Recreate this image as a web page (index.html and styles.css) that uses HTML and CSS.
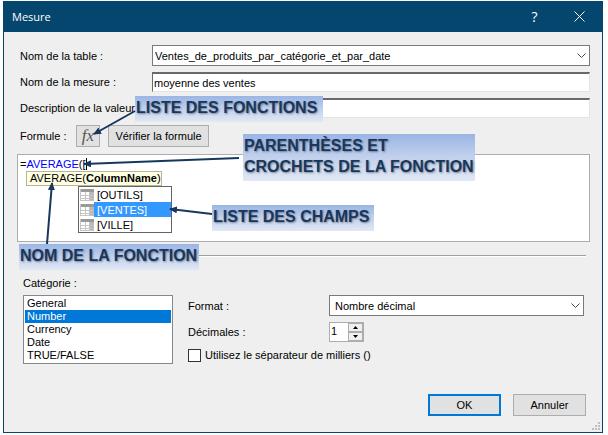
FILE: index.html
```html
<!DOCTYPE html>
<html lang="fr">
<head>
    <meta charset="UTF-8">
    <meta name="viewport" content="width=device-width, initial-scale=1.0">
    <title>Mesure</title>
    <link rel="stylesheet" href="styles.css">
</head>
<body>
    <div class="dialog">
        <header class="titlebar">
            <h1>Mesure</h1>
            <button type="button" class="caption-btn" aria-label="Aide">?</button>
            <button type="button" class="caption-btn" aria-label="Fermer">
                <svg width="11" height="11" viewBox="0 0 11 11"><path d="M.5.5l10 10M10.5.5l-10 10" stroke="#fff" fill="none"/></svg>
            </button>
        </header>

        <form class="content">
            <div class="fields">
                <label for="table">Nom de la table :</label>
                <div class="combo">
                    <select id="table">
                        <option>Ventes_de_produits_par_catégorie_et_par_date</option>
                    </select>
                    <svg class="chevron" width="9" height="6" viewBox="0 0 9 6"><path d="M.5.5l4 4 4-4" stroke="#444" fill="none"/></svg>
                </div>
                <label for="measure">Nom de la mesure :</label>
                <input type="text" class="sunken" id="measure" value="moyenne des ventes">
                <label for="description">Description de la valeur</label>
                <input type="text" class="sunken" id="description">
            </div>

            <div class="formula-bar">
                <span class="formula-label" id="formula-label">Formule :</span>
                <button type="button" class="btn fx" aria-label="Insérer une fonction"><i>fx</i></button>
                <button type="button" class="btn verify">Vérifier la formule</button>
            </div>

            <div class="editor">
                <div class="code" role="textbox" aria-labelledby="formula-label" contenteditable="true" spellcheck="false">=<span class="fn">AVERAGE</span>([<span class="caret"></span></div>
                <div class="hint">AVERAGE(<b>ColumnName</b>)</div>
                <ul class="columns">
                    <li><svg class="table-icon" width="14" height="12" viewBox="0 0 14 12"><use href="#grid"/></svg>[OUTILS]</li>
                    <li class="selected"><svg class="table-icon" width="14" height="12" viewBox="0 0 14 12"><use href="#grid"/></svg>[VENTES]</li>
                    <li><svg class="table-icon" width="14" height="12" viewBox="0 0 14 12"><use href="#grid"/></svg>[VILLE]</li>
                </ul>
            </div>

            <hr>

            <div class="format">
                <div class="category">
                    <label for="category">Catégorie :</label>
                    <select id="category" size="5">
                        <option>General</option>
                        <option selected>Number</option>
                        <option>Currency</option>
                        <option>Date</option>
                        <option>TRUE/FALSE</option>
                    </select>
                </div>
                <div class="options">
                    <label for="format">Format :</label>
                    <div class="combo">
                        <select id="format">
                            <option>Nombre décimal</option>
                        </select>
                        <svg class="chevron" width="9" height="6" viewBox="0 0 9 6"><path d="M.5.5l4 4 4-4" stroke="#444" fill="none"/></svg>
                    </div>
                    <label for="decimals">Décimales :</label>
                    <div class="spinner">
                        <input type="text" id="decimals" value="1">
                        <div class="spin-btns">
                            <button type="button" aria-label="Plus"><svg width="5" height="3" viewBox="0 0 5 3"><path d="M0 3L2.500 0 5 3z"/></svg></button>
                            <button type="button" aria-label="Moins"><svg width="5" height="3" viewBox="0 0 5 3"><path d="M0 0L2.500 3 5 0z"/></svg></button>
                        </div>
                    </div>
                    <label class="check"><input type="checkbox">Utilisez le séparateur de milliers ()</label>
                </div>
            </div>

            <div class="actions">
                <button type="submit" class="btn default">OK</button>
                <button type="button" class="btn">Annuler</button>
            </div>
        </form>

        <svg class="grip" width="8" height="8" viewBox="0 0 8 8"><path fill="#bfbfbf" d="M6 0h2v2H6zM3 3h2v2H3zM6 3h2v2H6zM0 6h2v2H0zM3 6h2v2H3zM6 6h2v2H6z"/></svg>
    </div>

    <!-- callouts -->
    <p class="callout functions">LISTE DES FONCTIONS</p>
    <p class="callout brackets">PARENTHÈSES ET<br>CROCHETS DE LA FONCTION</p>
    <p class="callout champs">LISTE DES CHAMPS</p>
    <p class="callout name">NOM DE LA FONCTION</p>
    <svg class="arrows" width="608" height="435" viewBox="0 0 608 435">
        <defs>
            <marker id="head" markerWidth="8" markerHeight="7" refX="7" refY="3.500" orient="auto" markerUnits="userSpaceOnUse"><path d="M0 0L8 3.500 0 7z" fill="#17375e"/></marker>
            <g id="grid">
                <path fill="#fff" d="M0 0h14v12H0z"/>
                <path fill="#999" d="M0 0h14v3H0z"/>
                <path fill="#b8b8b8" d="M10 3h4v9h-4z"/>
                <path stroke="#c4c4c4" fill="none" d="M.5 0v12M5.500 3v9M9.500 3v9M0 6.500h14M0 9.500h14M0 11.500h14"/>
            </g>
        </defs>
        <g stroke="#17375e" stroke-width="2">
            <path d="M135 111L94 134" marker-end="url(#head)"/>
            <path d="M239 158L84 164" marker-end="url(#head)"/>
            <path d="M212 214L170 209" marker-end="url(#head)"/>
            <path d="M47 244L52 183" marker-end="url(#head)"/>
        </g>
    </svg>
</body>
</html>
```
FILE: styles.css
```css
* {
    box-sizing: border-box;
}
body {
    position: relative;
    margin: 0;
    padding: 1px 5px 2px 3px;
    background: #fff;
    color: #000;
    font: 11px/14px "Liberation Sans", Arial, sans-serif;
}
input, select, button {
    font: inherit;
    color: inherit;
    border-radius: 0;
    margin: 0;
}
.dialog {
    position: relative;
    border: 1px solid #05466e;
    background: #efefef;
}
.titlebar {
    display: flex;
    align-items: center;
    height: 30px;
    padding-left: 8px;
    background: #05466e;
    color: #fff;
}
.titlebar h1 {
    flex: 1;
    margin: 0;
    font: 11px/16px "Open Sans", sans-serif;
}
.caption-btn {
    width: 45px;
    height: 30px;
    padding: 0;
    border: none;
    background: none;
    font: 14px/16px "Open Sans", sans-serif;
}
.content {
    padding: 13px 12px 16px 13px;
}

/* top fields */
.fields {
    display: grid;
    grid-template-columns: 132px 1fr;
    row-gap: 6px;
    align-items: center;
    padding-left: 3px;
}
.fields label {
    white-space: nowrap;
}
.combo {
    display: flex;
    position: relative;
}
.combo select {
    flex: 1;
    min-width: 0;
    height: 21px;
    padding: 0 20px 0 2px;
    border: 1px solid #7a7a7a;
    background: #fff;
    appearance: none;
}
.chevron {
    position: absolute;
    right: 4px;
    top: 8px;
    pointer-events: none;
}
.sunken {
    min-width: 0;
    height: 20px;
    padding: 0 1px;
    border: 1px solid;
    border-width: 2px 1px 1px;
    border-color: #696969 #e3e3e3 #e3e3e3 #696969;
    background: #fff;
}

/* formula */
.formula-bar {
    display: flex;
    align-items: center;
    padding: 7px 0 7px 3px;
}
.formula-label {
    width: 56px;
}
.btn {
    height: 22px;
    padding: 0;
    border: 1px solid #adadad;
    background: #e1e1e1;
}
.fx {
    width: 24px;
    margin-right: 8px;
    color: #555;
    font: 17px/16px "Liberation Serif", serif;
}
.verify {
    width: 101px;
}
.editor {
    min-height: 88px;
    padding: 2px;
    border: 1px solid #abadb3;
    background: #fff;
}
.code {
    line-height: 14px;
    outline: none;
}
.fn {
    color: #00f;
}
.caret {
    border-left: 1px solid #000;
}
.hint {
    width: max-content;
    margin-left: 6px;
    padding: 0 0 0 3px;
    border: 1px solid #b5b5a0;
    background: #ffffe1;
    line-height: 13px;
}
.columns {
    width: 94px;
    margin: 0 0 0 58px;
    padding: 0;
    border: 1px solid #646464;
    list-style: none;
}
.columns li {
    display: flex;
    align-items: center;
    gap: 3px;
    height: 15px;
    padding-left: 1px;
}
.columns .selected {
    background: linear-gradient(90deg, #fff 15px, #3399ff 15px);
    color: #fff;
}
hr {
    margin: 13px 4px 0 3px;
    border: 1px solid;
    border-color: #a0a0a0 transparent #fff;
    border-width: 1px 0;
}

/* number format */
.format {
    display: flex;
    gap: 15px;
    padding: 19px 6px 0 6px;
}
.category {
    display: flex;
    flex-direction: column;
    gap: 5px;
    width: 150px;
}
#category {
    height: 69px;
    padding: 1px;
    border: 1px solid #828790;
    background: #fff;
    overflow: hidden;
}
#category option {
    min-height: 13px;
    height: 13px;
    padding: 0 2px;
    color: #000;
    line-height: 13px;
}
#category option:checked {
    background: #0078d7 linear-gradient(#0078d7, #0078d7);
    -webkit-text-fill-color: #fff;
}
.options {
    flex: 1;
    display: grid;
    grid-template-columns: 141px 1fr;
    grid-template-rows: 21px 20px 14px;
    row-gap: 6px;
    align-items: center;
    padding-top: 19px;
}
.options .combo select {
    padding-left: 5px;
}
.spinner {
    display: flex;
    width: 35px;
    height: 20px;
    border: 1px solid #abadb3;
    background: #fff;
}
.spinner input {
    width: 18px;
    padding: 0 1px 2px;
    border: none;
}
.spin-btns {
    flex: 1;
    display: flex;
    flex-direction: column;
}
.spin-btns button {
    flex: 1;
    display: flex;
    align-items: center;
    justify-content: center;
    min-height: 0;
    padding: 0;
    border: 1px solid #acacac;
    background: #f0f0f0;
}
.check {
    grid-column: 1 / 3;
    display: flex;
    align-items: center;
    gap: 4px;
}
.check input {
    width: 13px;
    height: 13px;
    border: 1px solid #333;
    background: #fff;
    appearance: none;
}
.check input:checked {
    background: #0078d7;
}
.actions {
    display: flex;
    justify-content: flex-end;
    gap: 12px;
    padding: 30px 4px 0 0;
}
.actions .btn {
    width: 73px;
}
.actions .default {
    border: 2px solid #0078d7;
}
.grip {
    position: absolute;
    right: 2px;
    bottom: 2px;
}

/* callouts over the dialog */
.callout {
    position: absolute;
    margin: 0;
    padding: 1px 1px 4px;
    background: linear-gradient(#9ab5e4, #c2d1ed 50%, #e1e8f5);
    color: #17375e;
    font: bold 16px/21px "Liberation Sans", Arial, sans-serif;
    white-space: nowrap;
    text-shadow: 1px 1px 2px rgba(0, 0, 0, 0.4);
}
.functions {
    left: 135px;
    top: 96px;
    width: 188px;
}
.brackets {
    left: 243px;
    top: 134px;
    width: 232px;
}
.champs {
    left: 212px;
    top: 205px;
    width: 162px;
}
.name {
    left: 19px;
    top: 244px;
    width: 180px;
}
.arrows {
    position: absolute;
    left: 0;
    top: 0;
    pointer-events: none;
}
```
